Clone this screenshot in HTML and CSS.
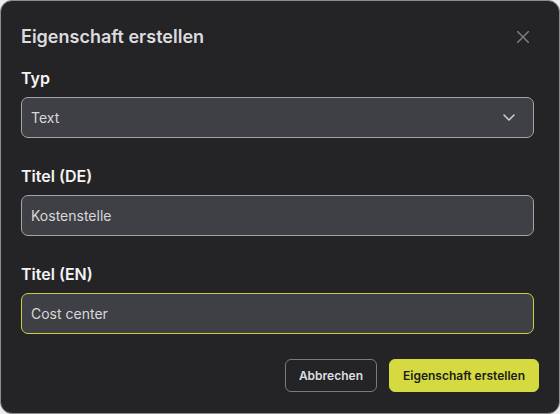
FILE: index.html
```html
<!DOCTYPE html>
<html lang="de">
<head>
<meta charset="utf-8">
<title>Eigenschaft erstellen</title>
<link rel="stylesheet" href="styles.css">
</head>
<body>
<div class="dialog">
  <div class="header">
    <h2 class="title">Eigenschaft erstellen</h2>
    <button class="close" aria-label="Schließen">
      <svg width="12" height="12" viewBox="0 0 12 12"><path d="M0.5 0.5 L11.5 11.5 M11.5 0.5 L0.5 11.5" stroke="currentColor" stroke-width="1.5" stroke-linecap="round" fill="none"/></svg>
    </button>
  </div>
  <div class="form">
    <div class="field">
      <div class="label">Typ</div>
      <div class="control select">
        <span>Text</span>
        <svg width="12" height="7" viewBox="0 0 12 7"><path d="M1 1 L6 6 L11 1" stroke="currentColor" stroke-width="1.5" stroke-linecap="round" stroke-linejoin="round" fill="none"/></svg>
      </div>
    </div>
    <div class="field">
      <div class="label">Titel (DE)</div>
      <div class="control">Kostenstelle</div>
    </div>
    <div class="field">
      <div class="label">Titel (EN)</div>
      <div class="control focused">Cost center</div>
    </div>
  </div>
  <div class="footer">
    <button class="btn secondary">Abbrechen</button>
    <button class="btn primary">Eigenschaft erstellen</button>
  </div>
</div>
</body>
</html>
```

FILE: styles.css
```css
html, body {
  margin: 0;
  padding: 0;
  background: #ececec;
}
body {
  font-family: Inter, "Liberation Sans", sans-serif;
}
.dialog {
  box-sizing: border-box;
  width: 560px;
  height: 414px;
  background: #242427;
  border: 1px solid #8c8c8f;
  border-radius: 12px;
  padding: 24px 20px 0 20px;
  display: flex;
  flex-direction: column;
}
.header {
  display: flex;
  align-items: center;
  justify-content: space-between;
  height: 24px;
}
.title {
  margin: 0;
  font-size: 18px;
  line-height: 24px;
  font-weight: 600;
  color: #dcdcde;
}
.close {
  background: none;
  border: none;
  padding: 0;
  margin-right: 10px;
  width: 12px;
  height: 12px;
  color: #7d7d82;
  display: flex;
}
.form {
  margin-top: 18px;
  margin-right: 5px;
  display: flex;
  flex-direction: column;
  gap: 27px;
}
.label {
  font-size: 16px;
  line-height: 22px;
  font-weight: 600;
  color: #f4f4f5;
  margin-bottom: 8px;
}
.control {
  box-sizing: border-box;
  height: 41px;
  border: 1px solid #a4a4a8;
  border-radius: 7px;
  background: #3f4045;
  padding: 0 9px;
  font-size: 14px;
  color: #d8d8da;
  display: flex;
  align-items: center;
}
.select {
  justify-content: space-between;
  padding-right: 18px;
}
.select svg {
  color: #d0d0d3;
}
.focused {
  border-color: #c8cf3c;
}
.footer {
  margin-top: 25px;
  display: flex;
  justify-content: flex-end;
  gap: 12px;
}
.btn {
  box-sizing: border-box;
  height: 33px;
  border-radius: 6px;
  font-family: Inter, "Liberation Sans", sans-serif;
  font-size: 12px;
  font-weight: 600;
  padding: 0 13px;
}
.secondary {
  background: #242427;
  border: 1px solid #7a7a7e;
  color: #dedee0;
}
.primary {
  background: #d4da3f;
  border: 1px solid #d4da3f;
  color: #1c1c1c;
}
```
